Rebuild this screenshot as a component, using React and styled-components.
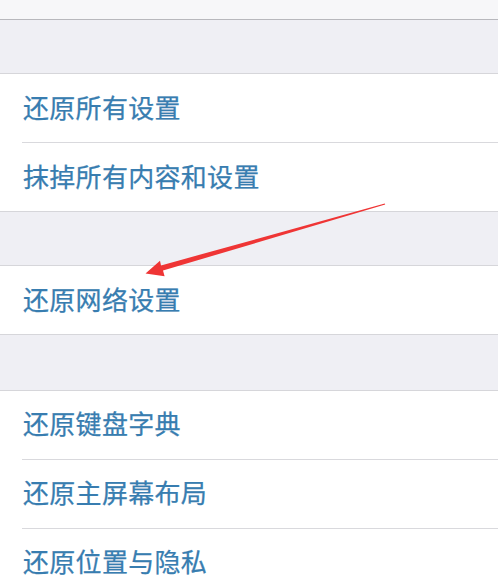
import React from 'react'
import styled, { createGlobalStyle } from 'styled-components'

const GlobalStyle = createGlobalStyle`
  html, body {
    margin: 0;
    padding: 0;
    background: #efeff4;
  }
  body {
    font-family: "Noto Sans CJK SC", "Noto Sans", sans-serif;
  }
`

const groups = [
  ['还原所有设置', '抹掉所有内容和设置'],
  ['还原网络设置'],
  ['还原键盘字典', '还原主屏幕布局', '还原位置与隐私'],
]

const Screen = styled.div`
  position: relative;
  width: 498px;
  height: 579px;
  overflow: hidden;
  background: #efeff4;
`

const TopBar = styled.div`
  height: 19px;
  background: #f7f7f9;
  border-bottom: 1px solid #b8b8bd;
`

const Spacer = styled.div`
  height: ${(p) => p.h}px;
  background: #efeff4;
  border-bottom: 1px solid #d6d6da;
`

const Group = styled.div`
  background: #ffffff;
  border-bottom: 1px solid #d6d6da;
`

const Row = styled.div`
  height: 68px;
  display: flex;
  align-items: center;
  padding-left: 23px;
  padding-bottom: ${(p) => p.pb}px;
  box-sizing: border-box;
  position: relative;
  font-size: 26px;
  font-weight: 400;
  color: #387db0;
  letter-spacing: 0.3px;
  -webkit-text-stroke: 0.25px #387db0;

  ${(p) =>
    !p.last &&
    `
    &::after {
      content: "";
      position: absolute;
      left: 22px;
      right: 0;
      bottom: -1px;
      height: 1px;
      background: #d9d9dd;
    }
  `}
  & + & {
    margin-top: 1px;
  }
`

const Arrow = styled.svg`
  position: absolute;
  left: 0;
  top: 0;
  pointer-events: none;
`

const App = () => {
  return (
    <Screen>
      <GlobalStyle />
      <TopBar />
      {groups.map((items, gi) => (
        <React.Fragment key={gi}>
          <Spacer h={gi === 2 ? 55 : 53} />
          <Group>
            {items.map((t, i) => (
              <Row key={t} pb={gi === 2 ? 6 : 4} last={i === items.length - 1 ? 1 : 0}>
                {t}
              </Row>
            ))}
          </Group>
        </React.Fragment>
      ))}
      <Arrow width="498" height="579" viewBox="0 0 498 579">
        <polygon
          points="385.2,204.4 163,270.6 164.6,276.2 145.5,273.4 160,260.8 161,265.4 384.8,203.6"
          fill="#ef3535"
        />
      </Arrow>
    </Screen>
  )
}

export default App
